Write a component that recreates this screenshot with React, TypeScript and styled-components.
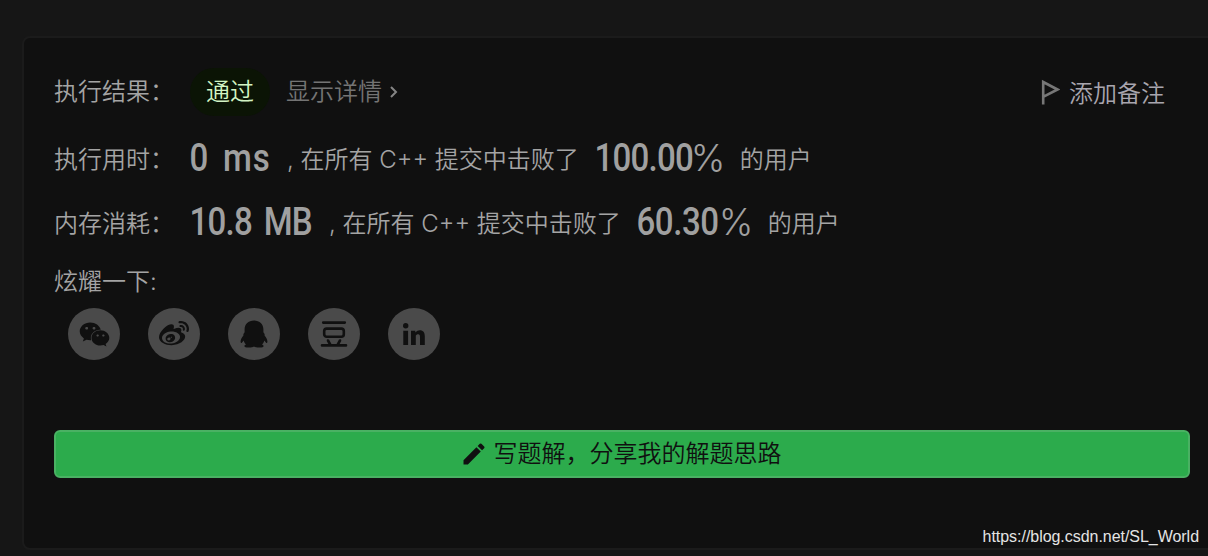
import type { ReactNode } from 'react';
import styled, { createGlobalStyle } from 'styled-components';
import { FaWeixin, FaWeibo } from 'react-icons/fa';
import { MdEdit } from 'react-icons/md';

const GlobalStyle = createGlobalStyle`
  * {
    box-sizing: border-box;
  }

  body {
    margin: 0;
    background: #161616;
    overflow: hidden;
  }
`;

const Page = styled.div`
  position: relative;
  height: 556px;
  padding: 36px 0 0 22px;
  overflow: hidden;
  color: #a4a4a4;
  font-family: Inter, 'Noto Sans CJK SC', sans-serif;
  font-size: 24px;
  font-weight: 350;
  line-height: 36px;
  white-space: nowrap;
`;

const Card = styled.section`
  width: 1220px;
  height: 514px;
  padding: 30px 52px 0 30px;
  background: #101010;
  border: 2px solid #1b1b1b;
  border-radius: 8px;
`;

const Header = styled.header`
  display: flex;
  align-items: center;
  height: 48px;
`;

const Label = styled.span`
  flex: none;
  width: 136px;
`;

const StatusPill = styled.span`
  width: 80px;
  height: 48px;
  border-radius: 24px;
  background: #0b1405;
  color: #d3f4c4;
  line-height: 48px;
  text-align: center;
`;

const DetailLink = styled.a`
  display: flex;
  align-items: center;
  margin-left: 16px;
  color: #747474;

  svg {
    margin-left: 7px;
  }
`;

const NoteButton = styled.a`
  display: flex;
  align-items: center;
  gap: 9px;
  margin: 4px 23px 0 auto;
  color: #a8a5ae;

  svg {
    margin-bottom: 5px;
  }
`;

const Stats = styled.div`
  margin-top: 12px;
`;

const StatRow = styled.div`
  display: flex;
  align-items: baseline;
  height: 64px;
  line-height: 64px;
`;

const StatText = styled.span`
  margin: 0 16px 0 17px;
`;

const Figure = styled.span<{ $width: number; $spacing?: number }>`
  flex: none;
  width: ${({ $width }) => $width}px;
  color: #a0a0a0;
  font-family: Roboto, sans-serif;
  font-size: 38px;
  font-weight: 500;
  letter-spacing: ${({ $spacing = -0.9 }) => $spacing}px;
  line-height: 1;
  word-spacing: 5px;
  transform: translate(-0.5px, 3px) scaleX(0.87);
  transform-origin: left;
`;

const Percent = styled.span`
  width: 32px;
  color: #a0a0a0;
  font-size: 37px;
  font-weight: 300;
  line-height: 1;
  transform: translateY(3px);
`;

const ShareTitle = styled.div`
  margin-top: 8px;
`;

const ShareList = styled.div`
  display: flex;
  gap: 28px;
  margin: 8px 0 0 14px;
`;

const ShareButton = styled.a`
  display: flex;
  align-items: center;
  justify-content: center;
  width: 52px;
  height: 52px;
  border-radius: 50%;
  background: #4a4a4a;
  color: #101010;
`;

const SolutionButton = styled.button`
  display: flex;
  align-items: center;
  justify-content: center;
  gap: 6px;
  width: 1136px;
  height: 48px;
  margin-top: 70px;
  padding: 0 3px 0 0;
  border: 2px solid #4ab163;
  border-radius: 6px;
  background: #2cab4c;
  color: #101010;
  font: inherit;
`;

const Watermark = styled.div`
  position: absolute;
  right: 9px;
  bottom: 9px;
  color: #e4e4e4;
  font: 16px/20px 'Liberation Sans', Arial, sans-serif;
  letter-spacing: -0.04px;
`;

interface StatProps {
  label: string;
  value: string;
  width: number;
  spacing?: number;
  percent: string;
  percentWidth: number;
  percentSpacing?: number;
}

function Stat({ label, value, width, spacing, percent, percentWidth, percentSpacing }: StatProps) {
  return (
    <StatRow>
      <Label>{label}</Label>
      <Figure $width={width} $spacing={spacing}>
        {value}
      </Figure>
      <StatText>, 在所有 C++ 提交中击败了</StatText>
      <Figure $width={percentWidth} $spacing={percentSpacing}>
        {percent}
      </Figure>
      <Percent>%</Percent>
      <StatText>的用户</StatText>
    </StatRow>
  );
}

function QqIcon() {
  return (
    <svg width="28" height="28" viewBox="0 0 28 28" fill="currentColor">
      <path d="M14 .5C8.3.5 4.6 4 4.6 9.3v3L3.4 14v1.6C1.8 17.6.6 19.5.6 21.5c0 1.5.6 1.8 1.5.9l1.6-1.9c.4 1.7 1.2 2.9 2.4 4-1.3.4-1.7 1-1.7 1.6 0 1 1.3 1.5 4.4 1.5 2.4 0 4.2-.5 5.2-1.2 1 .7 2.8 1.2 5.2 1.2 3.1 0 4.4-.5 4.4-1.5 0-.6-.4-1.2-1.7-1.6 1.2-1.1 2-2.3 2.4-4l1.6 1.9c.9.9 1.5.6 1.5-.9 0-2-1.2-3.9-2.8-5.9V14l-1.2-1.7v-3C23.4 4 19.7.5 14 .5z" />
    </svg>
  );
}

function DoubanIcon() {
  return (
    <svg width="28" height="28" viewBox="0 0 28 28" fill="none" stroke="currentColor" strokeWidth="2.6" strokeLinecap="round">
      <path d="M3.2 2.6h21.6M2 25.4h24M8 20.5l2.2 4M20 20.5l-2.2 4" />
      <rect x="4.2" y="8.6" width="19.6" height="8.2" rx="2.5" />
    </svg>
  );
}

function LinkedinIcon() {
  return (
    <svg width="24" height="24" viewBox="0 0 24 24" fill="currentColor">
      <circle cx="3.7" cy="3.7" r="2.7" />
      <path d="M1.3 8.7h4.8V23H1.3zM9 8.7h4.2l.3 1.8c1.2-1.4 2.6-2.2 4.3-2.2 3.4 0 5 2.3 5 6V23H18v-8.1c0-1.9-.5-2.7-1.8-2.7-1 0-1.6.5-2.4 1.3V23H9z" />
    </svg>
  );
}

const shares: { name: string; icon: ReactNode }[] = [
  { name: 'wechat', icon: <FaWeixin size={31} /> },
  { name: 'weibo', icon: <FaWeibo size={30} /> },
  { name: 'qq', icon: <QqIcon /> },
  { name: 'douban', icon: <DoubanIcon /> },
  { name: 'linkedin', icon: <LinkedinIcon /> },
];

function App() {
  return (
    <>
      <GlobalStyle />
      <Page>
        <Card>
          <Header>
            <Label>执行结果：</Label>
            <StatusPill>通过</StatusPill>
            <DetailLink>
              显示详情
              <svg width="10" height="14" viewBox="0 0 10 14" fill="none" stroke="#858585" strokeWidth="2">
                <path d="M2 2l5 5-5 5" />
              </svg>
            </DetailLink>
            <NoteButton>
              <svg width="20" height="26" viewBox="0 0 20 26" fill="none" stroke="#777" strokeWidth="2.6">
                <path d="M3.2 25.5V3L17.5 10.5 3.2 17.8" />
              </svg>
              添加备注
            </NoteButton>
          </Header>
          <Stats>
            <Stat label="执行用时：" value="0 ms" width={80} spacing={1.2} percent="100.00" percentWidth={96} />
            <Stat
              label="内存消耗："
              value="10.8 MB"
              width={122}
              percent="60.30"
              percentWidth={82}
              percentSpacing={-0.5}
            />
          </Stats>
          <ShareTitle>炫耀一下:</ShareTitle>
          <ShareList>
            {shares.map(({ name, icon }) => (
              <ShareButton key={name}>{icon}</ShareButton>
            ))}
          </ShareList>
          <SolutionButton>
            <MdEdit size={28} />
            写题解，分享我的解题思路
          </SolutionButton>
        </Card>
        <Watermark>https://blog.csdn.net/SL_World</Watermark>
      </Page>
    </>
  );
}

export default App;
